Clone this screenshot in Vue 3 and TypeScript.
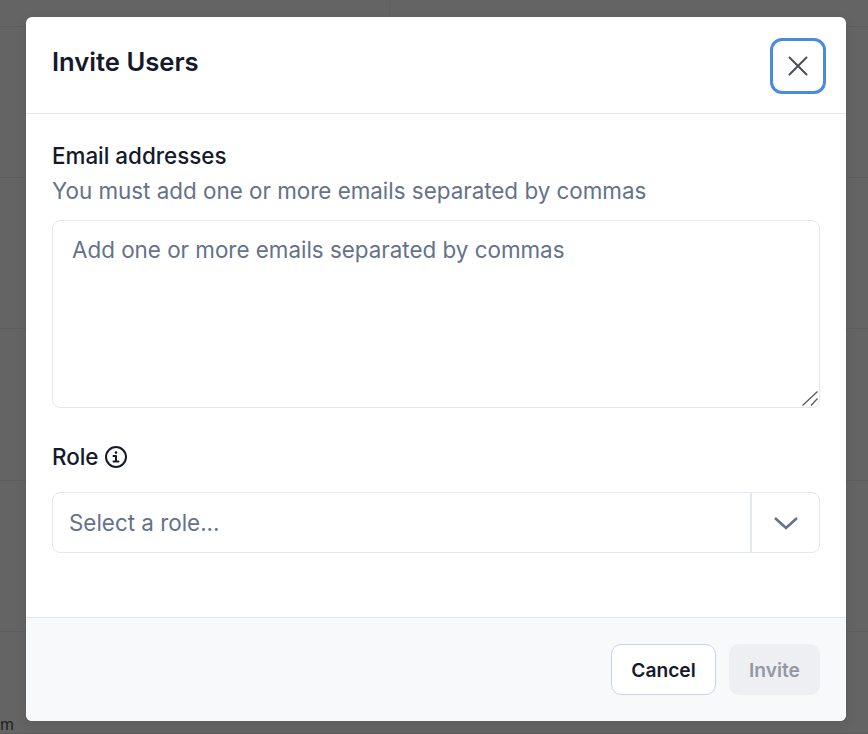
<template>
  <div class="page">
    <div class="table-bg">
      <div v-for="(h, i) in rowHeights" :key="i" class="bg-row" :style="{ height: h + 'px' }">
        <span v-if="i === 0" class="bg-cell-divider"></span>
      </div>
      <span class="bg-text">m</span>
    </div>

    <div class="modal" role="dialog">
      <header class="modal-header">
        <h2 class="modal-title">Invite Users</h2>
        <button class="close-btn" type="button" aria-label="Close">
          <svg width="24" height="24" viewBox="0 0 24 24" fill="none" stroke="#4a5058" stroke-width="2" stroke-linecap="round">
            <path d="M3.5 3.5 20.5 20.5M20.5 3.5 3.5 20.5" />
          </svg>
        </button>
      </header>

      <div class="modal-body">
        <label class="field-label">Email addresses</label>
        <p class="field-help">You must add one or more emails separated by commas</p>
        <div class="emails-wrap">
          <textarea class="emails" placeholder="Add one or more emails separated by commas"></textarea>
          <svg class="grip" width="16" height="15" viewBox="0 0 16 15" fill="none" stroke="#555" stroke-width="1.2">
            <path d="M0.5 14.5 15.5 0.5M9 14.5 15.5 7.5" />
          </svg>
        </div>

        <div class="role-label">
          <span class="field-label">Role</span>
          <svg width="24" height="24" viewBox="0 0 24 24" fill="none" stroke="#141a2b" stroke-width="2" stroke-linecap="round" stroke-linejoin="round">
            <circle cx="12" cy="12" r="10" />
            <path d="M9.5 11H12V16.5M9.5 16.5H14.5" />
            <path d="M12 7.5V7.6" stroke-width="2.6" />
          </svg>
        </div>

        <div class="role-select">
          <input class="role-input" readonly placeholder="Select a role..." />
          <span class="role-toggle">
            <svg width="26" height="16" viewBox="0 0 26 16" fill="none" stroke="#64728a" stroke-width="2.6">
              <path d="M2 3 13 13 24 3" />
            </svg>
          </span>
        </div>
      </div>

      <footer class="modal-footer">
        <button class="btn btn-cancel" type="button">Cancel</button>
        <button class="btn btn-invite" type="button" disabled>Invite</button>
      </footer>
    </div>
  </div>
</template>

<script setup lang="ts">
const rowHeights: number[] = [27, 151, 151, 152, 151, 102];
</script>

<style>
html,
body {
  margin: 0;
  height: 100%;
  overflow: hidden;
}
</style>

<style scoped>
.page {
  position: relative;
  width: 868px;
  height: 734px;
  background: #646464;
  font-family: Inter, "Liberation Sans", sans-serif;
  overflow: hidden;
}

.table-bg {
  height: 100%;
}

.bg-row {
  box-sizing: border-box;
  border-bottom: 1px solid #5c5d60;
}

.bg-cell-divider {
  display: block;
  width: 1px;
  height: 100%;
  margin-left: 389px;
  background: #5e5f61;
}

.bg-text {
  position: absolute;
  left: 0;
  top: 714px;
  font-size: 16px;
  line-height: 20px;
  color: #1f2123;
}

.modal {
  position: absolute;
  left: 26px;
  top: 17px;
  width: 820px;
  height: 704px;
  display: flex;
  flex-direction: column;
  background: #fff;
  border-radius: 6px;
  overflow: hidden;
  box-shadow: 0 4px 12px rgba(0, 0, 0, 0.08);
}

.modal-header {
  box-sizing: border-box;
  height: 97px;
  display: flex;
  justify-content: space-between;
  padding: 20.5px 20.5px 0 26px;
  border-bottom: 1px solid #e3e5e9;
}

.modal-title {
  margin: 8.5px 0 0;
  font-size: 25.6px;
  line-height: 32px;
  font-weight: 600;
  color: #141a2b;
}

.close-btn {
  box-sizing: border-box;
  width: 56px;
  height: 56px;
  display: flex;
  align-items: center;
  justify-content: center;
  padding: 0;
  background: #fff;
  border: 3px solid #4a8ae0;
  border-radius: 12px;
}

.modal-body {
  flex: 1;
  display: flex;
  flex-direction: column;
  padding: 28px 26px 0;
}

.field-label {
  font-size: 22.4px;
  line-height: 28px;
  font-weight: 500;
  color: #141a2b;
}

.field-help {
  margin: 7px 0 0;
  font-size: 22.4px;
  line-height: 28px;
  color: #64728a;
}

.emails-wrap {
  position: relative;
  height: 188px;
  margin-top: 15px;
}

.emails {
  display: block;
  box-sizing: border-box;
  width: 768px;
  height: 188px;
  padding: 15px 19px;
  font-family: inherit;
  font-size: 22.4px;
  line-height: 28px;
  color: #141a2b;
  background: #fff;
  border: 1px solid #e3e7ee;
  border-radius: 8px;
  outline: none;
  resize: none;
}

.grip {
  position: absolute;
  right: 2px;
  bottom: 2px;
}

.emails::placeholder,
.role-input::placeholder {
  color: #64728a;
  opacity: 1;
}

.role-label {
  display: flex;
  align-items: center;
  gap: 5.5px;
  margin-top: 35px;
}

.role-select {
  box-sizing: border-box;
  height: 61px;
  display: flex;
  margin-top: 21px;
  background: #fff;
  border: 1px solid #e3e7ee;
  border-radius: 8px;
}

.role-input {
  flex: 1;
  min-width: 0;
  padding: 0 16px;
  font-family: inherit;
  font-size: 22.4px;
  color: #141a2b;
  background: transparent;
  border: 0;
  outline: none;
}

.role-toggle {
  width: 67px;
  display: flex;
  align-items: center;
  justify-content: center;
  border-left: 2px solid #e3e7ee;
}

.modal-footer {
  box-sizing: border-box;
  height: 104px;
  display: flex;
  justify-content: flex-end;
  gap: 13px;
  padding: 26px 26px 0;
  background: #f8f9fb;
  border-top: 1px solid #e3e5e9;
}

.btn {
  box-sizing: border-box;
  height: 51px;
  font-family: inherit;
  font-size: 19.2px;
  font-weight: 600;
  border-radius: 10px;
}

.btn-cancel {
  width: 105px;
  color: #141a2b;
  background: #fff;
  border: 1px solid #ccd4e2;
}

.btn-invite {
  width: 91px;
  color: #9498a4;
  background: #edeff3;
  border: 0;
}
</style>
